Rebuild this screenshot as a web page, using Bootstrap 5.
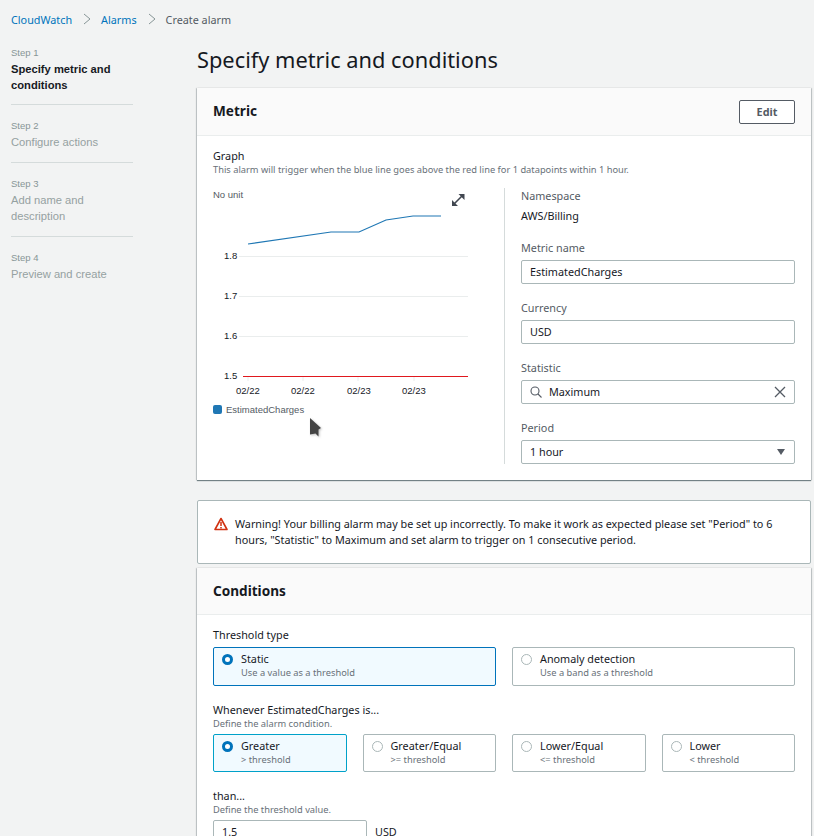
<!DOCTYPE html>
<html lang="en">
<head>
  <meta charset="UTF-8" />
  <title>Create alarm</title>
  <link href="https://cdn.jsdelivr.net/npm/bootstrap@5.3.3/dist/css/bootstrap.min.css" rel="stylesheet"/>
  <style>
    html, body { height: 836px; overflow: hidden; }
    body { background: #f2f3f3; color: #16191f; font-family: "Noto Sans", sans-serif; font-size: 10.8px; line-height: 16px; }
    a { color: #0073bb; text-decoration: none; }
    .crumbs { height: 40px; padding-left: 11px; font-size: 10.8px; }
    .crumbs span { color: #545b64; }
    .crumbs svg { margin: 0 10px 2px 11px; }
    .page-body { padding-right: 3px; }
    .wizard { width: 197px; flex: none; padding-left: 11px; padding-top: 5px; font-family: "Liberation Sans", sans-serif; }
    .wiz-step { width: 122px; padding-bottom: 12px; margin-bottom: 13px; border-bottom: 1px solid #d5dbdb; color: #95a1a1; font-size: 11.2px; line-height: 16px; }
    .wiz-step:last-child { border-bottom: 0; }
    .wiz-step small { display: block; font-size: 9.5px; color: #879596; }
    .wiz-step.active { color: #16191f; font-weight: 700; padding-bottom: 11px; }
    .wiz-step.active small { font-weight: 400; }
    .main-col { flex: 1; min-width: 0; }
    .page-title { font-size: 21.8px; line-height: 28px; font-weight: 400; margin: 6px 0 14px; }
    .aws-card { background: #fff; box-shadow: 0 1px 1px rgba(0,28,36,.5), 1px 0 1px rgba(0,28,36,.15), -1px 0 1px rgba(0,28,36,.15); }
    .aws-head { height: 48px; padding: 0 16px; background: #fafafa; border-bottom: 1px solid #eaeded; }
    .aws-head.short { height: 47px; }
    .aws-head h2 { font-size: 13.6px; font-weight: 700; margin: 0; }
    .edit-btn { width: 56px; height: 24px; padding: 0; border: 1px solid #545b64; border-radius: 2px; background: #fff; color: #545b64; font-size: 10.8px; font-weight: 700; line-height: 20px; }
    .aws-body { padding: 12px 16px 16px; }
    .fld-label { font-size: 10.8px; line-height: 16px; }
    .fld-hint { font-size: 9.3px; line-height: 12px; color: #687078; }
    .chart-row { margin-top: 12px; }
    .chart-col { width: 292px; flex: none; border-right: 1px solid #d5dbdb; position: relative; }
    .chart-svg { display: block; }
    .chart-svg text { font-family: "Liberation Sans", sans-serif; font-size: 9.5px; fill: #16191f; }
    .chart-svg text.muted { fill: #545b64; }
    .side-col { flex: 1; min-width: 0; padding-left: 16px; }
    .side-col .fld-label { color: #545b64; }
    .aws-input { height: 24px; border: 1px solid #aab7b8; border-radius: 2px; padding: 0 8px; line-height: 22px; font-size: 10.8px; background: #fff; }
    .stat-input { gap: 7px; }
    .thresh { width: 154px; }
    .warn-box { background: #fff; border: 1px solid #aab7b8; border-radius: 2px; height: 64px; margin: 20px 0 4px; padding: 15px 16px; gap: 7px; }
    .warn-icon { margin-top: 1px; }
    .choice { border: 1px solid #aab7b8; border-radius: 2px; padding: 4px 8px; height: 38px; gap: 8px; flex: 1 1 0; min-width: 0; line-height: 14px; }
    .choice.tall { height: 39px; }
    .choice.on { background: #f1faff; border-color: #00a1c9; }
    .choice.on.tall { border-color: #0073bb; }
    .choice small { display: block; font-size: 9.3px; color: #687078; line-height: 13px; }
    .dot { width: 11px; height: 11px; border-radius: 50%; border: 1px solid #aab7b8; background: #fff; flex: none; margin-top: 2px; }
    .on .dot { border: 3px solid #0073bb; }
    .row-gap-a { margin-bottom: 16px; }
    .hint-gap { margin-bottom: 4px; }
    .pointer { position: absolute; left: 97px; top: 230px; filter: drop-shadow(1px 1px 1px rgba(0,0,0,.25)); }
  </style>
</head>
<body>
  <nav class="crumbs d-flex align-items-center">
    <a href="#">CloudWatch</a>
    <svg width="8" height="12" viewBox="0 0 8 12"><path d="M1 1l6 5-6 5" fill="none" stroke="#879596"/></svg>
    <a href="#">Alarms</a>
    <svg width="8" height="12" viewBox="0 0 8 12"><path d="M1 1l6 5-6 5" fill="none" stroke="#879596"/></svg>
    <span>Create alarm</span>
  </nav>

  <div class="page-body d-flex">
    <aside class="wizard">
      <div class="wiz-step active"><small>Step 1</small>Specify metric and conditions</div>
      <div class="wiz-step"><small>Step 2</small>Configure actions</div>
      <div class="wiz-step"><small>Step 3</small>Add name and description</div>
      <div class="wiz-step"><small>Step 4</small>Preview and create</div>
    </aside>

    <main class="main-col">
      <h1 class="page-title">Specify metric and conditions</h1>

      <section class="aws-card">
        <div class="aws-head d-flex align-items-center justify-content-between">
          <h2>Metric</h2>
          <button class="edit-btn" type="button">Edit</button>
        </div>
        <div class="aws-body">
          <div class="fld-label">Graph</div>
          <div class="fld-hint">This alarm will trigger when the blue line goes above the red line for 1 datapoints within 1 hour.</div>
          <div class="d-flex chart-row">
            <div class="chart-col">
              <svg class="chart-svg" width="291" height="276" viewBox="213 188 291 276">
                <text class="muted" x="213" y="198">No unit</text>
                <path d="M239 256.5h229M239 296.5h229M239 336.5h229" stroke="#eaeded"/>
                <path d="M248 377v4M303 377v4M358 377v4M414 377v4" stroke="#eaeded"/>
                <text x="224" y="259">1.8</text>
                <text x="224" y="299">1.7</text>
                <text x="224" y="339">1.6</text>
                <text x="224" y="379">1.5</text>
                <path d="M248 244l83-12h28l27-12 27-4h28" fill="none" stroke="#1f77b4" stroke-width="1.2"/>
                <path d="M243 376.5h225" fill="none" stroke="#e0181e" stroke-width="1.2"/>
                <text x="236" y="394">02/22</text>
                <text x="291" y="394">02/22</text>
                <text x="347" y="394">02/23</text>
                <text x="402" y="394">02/23</text>
                <rect x="213" y="405" width="9" height="9" rx="2" fill="#1f77b4"/>
                <text class="muted" x="226" y="413">EstimatedCharges</text>
                <path d="M454 204l8-8" fill="none" stroke="#414750" stroke-width="1.6"/>
                <path d="M458.5 194h6v6zM452 200v6h6z" fill="#414750"/>
              </svg>
              <svg class="pointer" width="13" height="21" viewBox="0 0 13 21"><path d="M0 0l11 10-2.500 1.500v7l-3-3-5.500 1z" fill="#444"/></svg>
            </div>
            <div class="side-col">
              <div class="fld-label">Namespace</div>
              <div class="mt-1 mb-3">AWS/Billing</div>
              <div class="fld-label mb-1">Metric name</div>
              <div class="aws-input mb-3">EstimatedCharges</div>
              <div class="fld-label mb-1">Currency</div>
              <div class="aws-input mb-3">USD</div>
              <div class="fld-label mb-1">Statistic</div>
              <div class="aws-input stat-input mb-3 d-flex align-items-center">
                <svg width="12" height="12" viewBox="0 0 12 12"><circle cx="5" cy="5" r="4" fill="none" stroke="#545b64" stroke-width="1.1"/><path d="M8 8l3.500 3.500" stroke="#545b64" stroke-width="1.1"/></svg>
                <span class="flex-grow-1">Maximum</span>
                <svg width="12" height="12" viewBox="0 0 12 12"><path d="M1 1l10 10M11 1L1 11" stroke="#545b64" stroke-width="1.3"/></svg>
              </div>
              <div class="fld-label mb-1">Period</div>
              <div class="aws-input d-flex align-items-center justify-content-between">
                <span>1 hour</span>
                <svg width="10" height="6" viewBox="0 0 10 6"><path d="M1 0h8L5 6z" fill="#545b64"/></svg>
              </div>
            </div>
          </div>
        </div>
      </section>

      <div class="warn-box d-flex">
        <svg class="warn-icon flex-shrink-0" width="14" height="14" viewBox="0 0 14 14"><path d="M7 1.500l6 11H1z" fill="#fff" stroke="#d13212" stroke-width="1.600" stroke-linejoin="round"/><path d="M7 5v4M7 10v1.500" stroke="#d13212" stroke-width="1.500"/></svg>
        <div>Warning! Your billing alarm may be set up incorrectly. To make it work as expected please set "Period" to 6 hours, "Statistic" to Maximum and set alarm to trigger on 1 consecutive period.</div>
      </div>

      <section class="aws-card">
        <div class="aws-head short d-flex align-items-center"><h2>Conditions</h2></div>
        <div class="aws-body">
          <div class="fld-label mb-1">Threshold type</div>
          <div class="d-flex gap-3 row-gap-a">
            <div class="choice tall on d-flex"><span class="dot"></span><div>Static<small>Use a value as a threshold</small></div></div>
            <div class="choice tall d-flex"><span class="dot"></span><div>Anomaly detection<small>Use a band as a threshold</small></div></div>
          </div>
          <div class="fld-label">Whenever EstimatedCharges is...</div>
          <div class="fld-hint hint-gap">Define the alarm condition.</div>
          <div class="d-flex gap-3 mb-3">
            <div class="choice on d-flex"><span class="dot"></span><div>Greater<small>&gt; threshold</small></div></div>
            <div class="choice d-flex"><span class="dot"></span><div>Greater/Equal<small>&gt;= threshold</small></div></div>
            <div class="choice d-flex"><span class="dot"></span><div>Lower/Equal<small>&lt;= threshold</small></div></div>
            <div class="choice d-flex"><span class="dot"></span><div>Lower<small>&lt; threshold</small></div></div>
          </div>
          <div class="fld-label">than...</div>
          <div class="fld-hint mb-1">Define the threshold value.</div>
          <div class="d-flex align-items-center gap-2">
            <div class="aws-input thresh">1.5</div><span>USD</span>
          </div>
        </div>
      </section>
    </main>
  </div>
  <script src="https://cdn.jsdelivr.net/npm/bootstrap@5.3.3/dist/js/bootstrap.bundle.min.js"></script>
</body>
</html>
